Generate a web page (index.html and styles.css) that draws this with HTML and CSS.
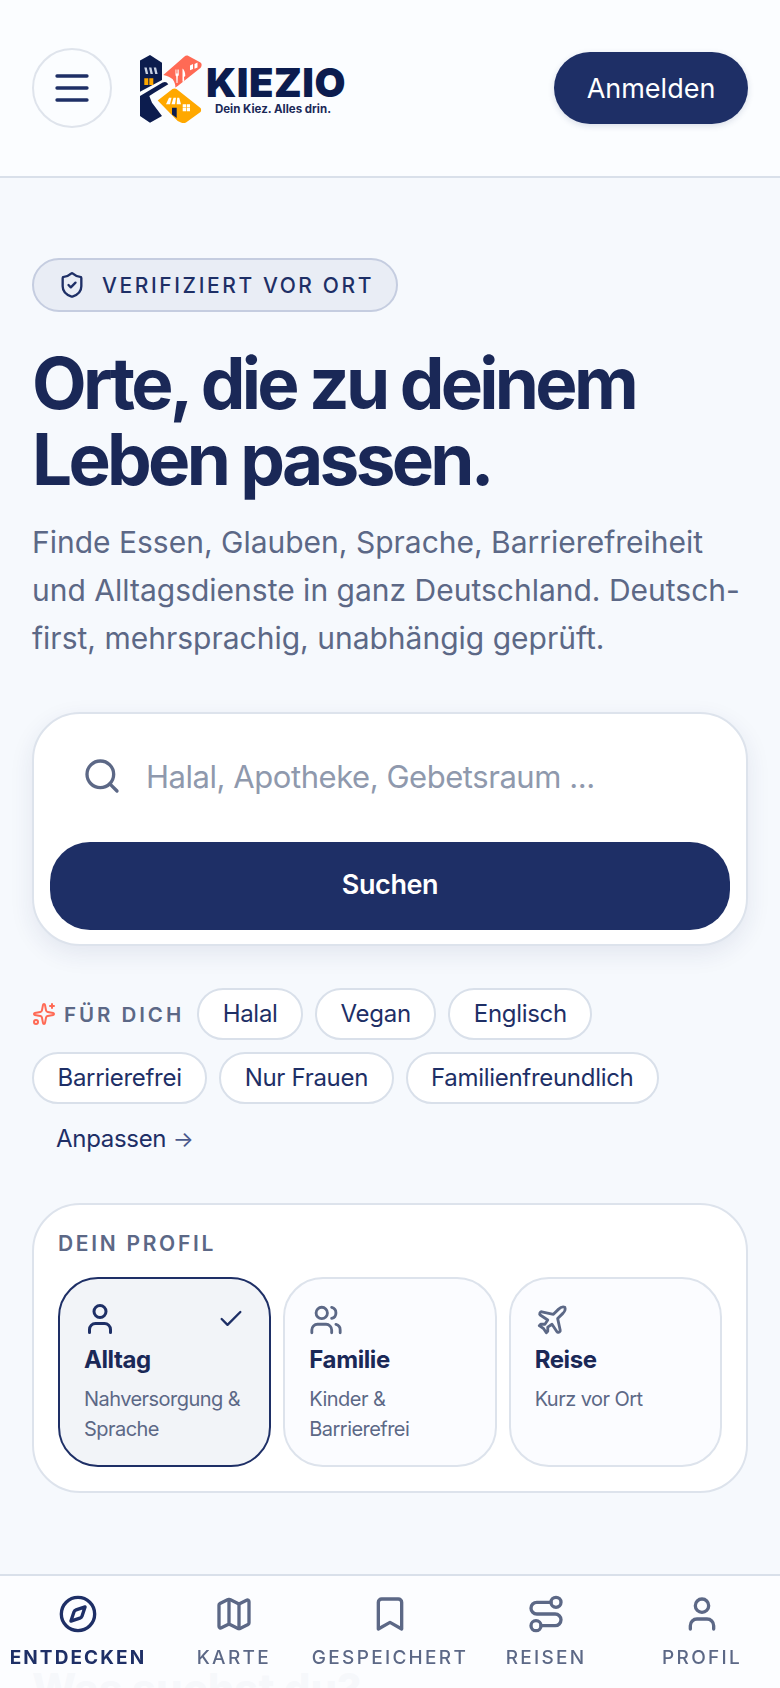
FILE: index.html
```html
<!DOCTYPE html>
<html lang="de">
<head>
<meta charset="UTF-8" />
<title>Kiezio</title>
<link rel="stylesheet" href="styles.css">
</head>
<body>

<header class="topbar">
  <button class="menu-btn" aria-label="Menü">
    <svg class="icon" width="40" height="40" viewBox="0 0 24 24"><path d="M3 4.800h18M3 12h18M3 19.200h18"/></svg>
  </button>
  <a class="logo">
    <svg class="logo-mark" width="66" height="70" viewBox="0 0 66 70">
      <path fill="#0c1c4e" d="M2 7.500 12 2l12 7.700V27L2 38.700z"/>
      <path fill="#0c1c4e" d="M2 43 24.700 29.500c1.500-.8 3-.8 4 0l1.600 1.800-14 8.400-5 3.300 2.700 6.700L24 63l-12 6.700L2 63z"/>
      <path fill="#ff6a55" d="M25.300 22 46.500 3.500c1-1 2.500-1.300 4-.5l12 6.500c1.500.8 1.500 3.700.2 5.200L39.700 33l-2.400 1.500c.3-2.500-.5-4.800-2.600-8.200-2-1.800-5.400-3.300-9.400-4.300z"/>
      <path fill="#ffa800" d="M19.700 47.500 34.500 36c1-.8 3-.8 4 0L62.500 55c.8.8.8 3 0 4L48 69.500c-1.500.9-3.500.9-5 0L39.700 68z"/>
      <path fill="#c9d2e4" d="M6.300 14.500h2.400l1.500 6.500H7.800zM11 14.500h2.400l1.500 6.500h-2.400zM15.700 14.500h2.400l1.500 6.500h-2.400z"/>
      <path fill="#ffa800" d="M6.300 25.300h4v6.700h-4zM11.300 25.300h4v6.700h-4z"/>
      <path fill="#fff" d="M37.500 16.500h.7v4h.6v-4h.7v4h.6v-4h.7v5c0 1-.6 1.500-1 1.700l-.3 6.800h-1l-.3-6.800c-.4-.2-.7-.7-.7-1.700zM44.500 15.500c1.500 1 2.800 3.500 2.800 7.500l-1.300 1 .3 4.800h-1.800z"/>
      <path fill="#fff" d="M52 12.500l3-1.500V16l-3 1.300zM56.500 11l3-1.500v5l-3 1.300z"/>
      <path fill="#fff" d="M28 51.300l3-6.600h2.500l-1.500 6.600zM33.500 51.300l2-6.600H38l-1 6.600zM38.700 51.300l.5-6.600h2l1.800 6.600z"/>
      <path fill="#0c1c4e" d="M34 54.700h4.700V65L34 61.500z"/>
      <path fill="#fff" d="M44.700 51.300h3.300v3.100h-3.300zM48.700 51.300H52v3.100h-3.300zM44.700 55.100h3.300v3.100h-3.300zM48.700 55.100H52v3.100h-3.300z"/>
    </svg>
    <span class="logo-text">
      <span class="logo-name">KIEZIO</span>
      <span class="logo-tag">Dein Kiez. Alles drin.</span>
    </span>
  </a>
  <button class="login-btn">Anmelden</button>
</header>

<main class="content">
  <div class="badge">
    <svg class="icon" width="28" height="28" viewBox="0 0 24 24"><path d="M20 13c0 5-3.500 7.500-7.660 8.950a1 1 0 0 1-.67-.01C7.500 20.500 4 18 4 13V6a1 1 0 0 1 1-1c2 0 4.500-1.200 6.240-2.720a1.170 1.170 0 0 1 1.520 0C14.510 3.810 17 5 19 5a1 1 0 0 1 1 1z"/><path d="m9 12 2 2 4-4"/></svg>
    <span>VERIFIZIERT VOR ORT</span>
  </div>

  <h1>Orte, die zu deinem Leben passen.</h1>
  <p class="lead">Finde Essen, Glauben, Sprache, Barrierefreiheit und Alltagsdienste in ganz Deutschland. Deutsch-first, mehrsprachig, unabhängig geprüft.</p>

  <form class="search-card">
    <label class="search-row">
      <svg class="icon" width="40" height="40" viewBox="0 0 24 24"><circle cx="11" cy="11" r="8"/><path d="m21 21-4.300-4.300"/></svg>
      <input type="text" placeholder="Halal, Apotheke, Gebetsraum ..." />
    </label>
    <button class="search-btn" type="button">Suchen</button>
  </form>

  <div class="chips">
    <span class="chips-label">
      <svg class="icon" width="24" height="24" viewBox="0 0 24 24"><path d="M11.017 2.814a1 1 0 0 1 1.966 0l1.051 5.558a2 2 0 0 0 1.594 1.594l5.558 1.051a1 1 0 0 1 0 1.966l-5.558 1.051a2 2 0 0 0-1.594 1.594l-1.051 5.558a1 1 0 0 1-1.966 0l-1.051-5.558a2 2 0 0 0-1.594-1.594l-5.558-1.051a1 1 0 0 1 0-1.966l5.558-1.051a2 2 0 0 0 1.594-1.594z"/><path d="M20 2v4M22 4h-4"/><circle cx="4" cy="20" r="2"/></svg>
      FÜR DICH
    </span>
    <button class="chip">Halal</button>
    <button class="chip">Vegan</button>
    <button class="chip">Englisch</button>
    <button class="chip">Barrierefrei</button>
    <button class="chip">Nur Frauen</button>
    <button class="chip">Familienfreundlich</button>
    <a class="chip-link">Anpassen <span class="arrow">→</span></a>
  </div>

  <section class="profile-card">
    <div class="profile-title">DEIN PROFIL</div>
    <div class="profile-grid">
      <div class="profile-opt active">
        <svg class="icon opt-user" width="36" height="36" viewBox="0 0 24 24"><path d="M19 21v-2a4 4 0 0 0-4-4H9a4 4 0 0 0-4 4v2"/><circle cx="12" cy="7" r="4"/></svg>
        <svg class="icon tick" width="28" height="28" viewBox="0 0 24 24"><path d="M20 6 9 17l-5-5"/></svg>
        <div class="opt-name">Alltag</div>
        <div class="opt-desc">Nahversorgung &amp; Sprache</div>
      </div>
      <div class="profile-opt">
        <svg class="icon" width="34" height="34" viewBox="0 0 24 24"><path d="M16 21v-2a4 4 0 0 0-4-4H6a4 4 0 0 0-4 4v2"/><circle cx="9" cy="7" r="4"/><path d="M22 21v-2a4 4 0 0 0-3-3.870"/><path d="M16 3.130a4 4 0 0 1 0 7.750"/></svg>
        <div class="opt-name">Familie</div>
        <div class="opt-desc">Kinder &amp; Barrierefrei</div>
      </div>
      <div class="profile-opt">
        <svg class="icon" width="34" height="34" viewBox="0 0 24 24"><path d="M17.800 19.200 16 11l3.500-3.500C21 6 21.500 4 21 3c-1-.5-3 0-4.500 1.500L13 8 4.800 6.200c-.5-.1-.9.1-1.100.5l-.3.5c-.2.5-.1 1 .3 1.300L9 12l-2 3H4l-1 1 3 2 2 3 1-1v-3l3-2 3.500 5.300c.3.4.8.5 1.300.3l.5-.2c.4-.3.6-.7.5-1.200z"/></svg>
        <div class="opt-name">Reise</div>
        <div class="opt-desc">Kurz vor Ort</div>
      </div>
    </div>
  </section>

  <h2>Was suchst du?</h2>
</main>

<nav class="bottom-nav">
  <a class="nav-item active">
    <svg class="icon" width="40" height="40" viewBox="0 0 24 24"><circle cx="12" cy="12" r="10"/><path d="m16.240 7.760-1.804 5.411a2 2 0 0 1-1.265 1.265L7.760 16.240l1.804-5.411a2 2 0 0 1 1.265-1.265z"/></svg>
    <span>ENTDECKEN</span>
  </a>
  <a class="nav-item">
    <svg class="icon" width="40" height="40" viewBox="0 0 24 24"><path d="M14.106 5.553a2 2 0 0 0 1.788 0l3.659-1.830A1 1 0 0 1 21 4.619v12.764a1 1 0 0 1-.553.894l-4.553 2.277a2 2 0 0 1-1.788 0l-4.212-2.106a2 2 0 0 0-1.788 0l-3.659 1.830A1 1 0 0 1 3 19.381V6.618a1 1 0 0 1 .553-.894l4.553-2.277a2 2 0 0 1 1.788 0z"/><path d="M15 5.764v15"/><path d="M9 3.236v15"/></svg>
    <span>KARTE</span>
  </a>
  <a class="nav-item">
    <svg class="icon" width="40" height="40" viewBox="0 0 24 24"><path d="m19 21-7-4-7 4V5a2 2 0 0 1 2-2h10a2 2 0 0 1 2 2v16z"/></svg>
    <span>GESPEICHERT</span>
  </a>
  <a class="nav-item">
    <svg class="icon" width="40" height="40" viewBox="0 0 24 24"><circle cx="6" cy="19" r="3"/><path d="M9 19h8.500a3.500 3.500 0 0 0 0-7h-11a3.500 3.500 0 0 1 0-7H15"/><circle cx="18" cy="5" r="3"/></svg>
    <span>REISEN</span>
  </a>
  <a class="nav-item">
    <svg class="icon" width="40" height="40" viewBox="0 0 24 24"><path d="M19 21v-2a4 4 0 0 0-4-4H9a4 4 0 0 0-4 4v2"/><circle cx="12" cy="7" r="4"/></svg>
    <span>PROFIL</span>
  </a>
</nav>

</body>
</html>
```

FILE: styles.css
```css
* {
  box-sizing: border-box;
}

html, body {
  margin: 0;
  padding: 0;
  height: 1688px;
  overflow: hidden;
}

body {
  background: #f6f9fd;
  color: #1a2857;
  font-family: Inter, "Noto Sans", Arial, sans-serif;
}

button, input {
  font-family: inherit;
}

.icon {
  flex: none;
  fill: none;
  stroke: currentColor;
  stroke-width: 2;
  stroke-linecap: round;
  stroke-linejoin: round;
}

.topbar {
  display: flex;
  align-items: center;
  height: 178px;
  padding: 0 32px;
  background-color: #fbfdff;
  border-bottom: 2px solid #d9e0ea;
}

.menu-btn {
  display: flex;
  align-items: center;
  justify-content: center;
  width: 80px;
  height: 80px;
  padding: 0;
  border: 2px solid #dfe4ec;
  border-radius: 50%;
  background: transparent;
  color: #1e2f66;
  margin-right: 26px;
}

.logo {
  display: flex;
  align-items: flex-start;
  gap: 2px;
}

.logo-text {
  display: flex;
  flex-direction: column;
  align-items: center;
  padding-top: 11px;
}

.logo-name {
  font-size: 40px;
  line-height: 38px;
  font-weight: 900;
  letter-spacing: 0.500px;
  color: #0c1c4e;
}

.logo-tag {
  margin-right: 6px;
  font-size: 11.500px;
  line-height: 14px;
  font-weight: 700;
  color: #1a2857;
}

.login-btn {
  margin-left: auto;
  width: 194px;
  height: 72px;
  border: none;
  border-radius: 36px;
  background-color: #1e2f66;
  color: white;
  font-size: 27px;
  font-weight: 400;
  box-shadow: 0 2px 6px rgba(30, 47, 102, 0.15);
}

.content {
  padding: 80px 32px 0;
}

.badge {
  display: inline-flex;
  align-items: center;
  gap: 16px;
  height: 54px;
  width: 366px;
  padding: 0 20px 0 24px;
  border: 2px solid #c5cde0;
  border-radius: 27px;
  background-color: #e9edf5;
  color: #1e2f66;
  font-size: 21px;
  font-weight: 500;
  letter-spacing: 2.600px;
  white-space: nowrap;
}

h1 {
  margin: 33px 0 0;
  font-size: 71px;
  line-height: 76px;
  font-weight: 700;
  letter-spacing: -3.700px;
  color: #1a2857;
}

.lead {
  margin: 21px 0 0;
  font-size: 30px;
  line-height: 48px;
  color: #5c6886;
}

.search-card {
  margin-top: 50px;
  height: 234px;
  padding: 16px 16px 14px;
  border: 2px solid #dde3ec;
  border-radius: 48px;
  background-color: white;
  box-shadow: 0 8px 24px rgba(30, 47, 102, 0.09);
}

.search-row {
  display: flex;
  align-items: center;
  gap: 22px;
  height: 112px;
  padding: 0 0 20px 32px;
  color: #5c6886;
}

.search-row input {
  flex: 1;
  min-width: 0;
  border: none;
  outline: none;
  background: transparent;
  font-size: 31px;
  letter-spacing: -0.450px;
  color: #1a2857;
}

.search-row input::placeholder {
  color: #8f99ad;
  opacity: 1;
}

.search-btn {
  display: block;
  width: 100%;
  height: 88px;
  padding-bottom: 4px;
  border: none;
  border-radius: 40px;
  background-color: #1e2f66;
  color: white;
  font-size: 27px;
  font-weight: 600;
  letter-spacing: -0.400px;
}

.chips {
  display: flex;
  flex-wrap: wrap;
  align-items: center;
  gap: 12px;
  margin-top: 42px;
}

.chips-label {
  display: flex;
  align-items: center;
  gap: 8px;
  margin-right: 1px;
  color: #5c6886;
  font-size: 20.500px;
  font-weight: 600;
  letter-spacing: 2.950px;
}

.chips-label .icon {
  color: #ff6a55;
}

.chip {
  height: 52px;
  padding: 0 23.500px 2px;
  border: 2px solid #d9e0ea;
  border-radius: 26px;
  background-color: white;
  color: #1e2f66;
  font-size: 24px;
  font-weight: 400;
  letter-spacing: -0.300px;
  white-space: nowrap;
}

.chip-link {
  height: 49px;
  padding: 0 24px;
  line-height: 46px;
  color: #1e2f66;
  font-size: 24px;
  letter-spacing: -0.300px;
}

.arrow {
  font-size: 22px;
  color: #4a5a8c;
}

.profile-card {
  margin-top: 38px;
  height: 290px;
  padding: 24px;
  border: 2px solid #dde3ec;
  border-radius: 48px;
  background-color: white;
}

.profile-title {
  height: 28px;
  padding-top: 3px;
  line-height: 24px;
  color: #5c6886;
  font-size: 21px;
  font-weight: 600;
  letter-spacing: 2.700px;
}

.profile-grid {
  display: grid;
  grid-template-columns: repeat(3, 1fr);
  gap: 12px;
  margin-top: 20px;
}

.profile-opt {
  position: relative;
  height: 190px;
  padding: 24px;
  border: 2px solid #dde3ec;
  border-radius: 40px;
  background-color: #fbfcff;
  color: #5c6886;
}

.profile-opt.active {
  border-color: #1e2f66;
  background-color: #f2f4f8;
  color: #1e2f66;
}

.profile-opt .icon {
  display: block;
}

.profile-opt .opt-user {
  margin: -2px 0 0 -2px;
}

.profile-opt .tick {
  position: absolute;
  top: 26px;
  right: 24px;
}

.opt-name {
  margin-top: 7px;
  font-size: 24px;
  line-height: 32px;
  font-weight: 700;
  letter-spacing: -0.400px;
  color: #1a2857;
}

.opt-desc {
  margin-top: 8px;
  font-size: 20px;
  line-height: 30px;
  letter-spacing: -0.550px;
  color: #5c6886;
}

h2 {
  margin: 174px 0 0;
  font-size: 42px;
  line-height: 44px;
  font-weight: 800;
  color: #1a2857;
}

.bottom-nav {
  position: fixed;
  left: 0;
  right: 0;
  bottom: 0;
  display: grid;
  grid-template-columns: repeat(5, 1fr);
  height: 114px;
  border-top: 2px solid #d9e0ea;
  background-color: rgba(252, 253, 255, 0.975);
}

.nav-item {
  display: flex;
  flex-direction: column;
  align-items: center;
  padding-top: 18px;
  color: #5c6886;
  font-size: 19px;
  font-weight: 500;
  letter-spacing: 2.300px;
  white-space: nowrap;
}

.nav-item span {
  margin-top: 12px;
  line-height: 24px;
}

.nav-item.active {
  color: #1e2f66;
  font-weight: 700;
  letter-spacing: 2.100px;
}
```
